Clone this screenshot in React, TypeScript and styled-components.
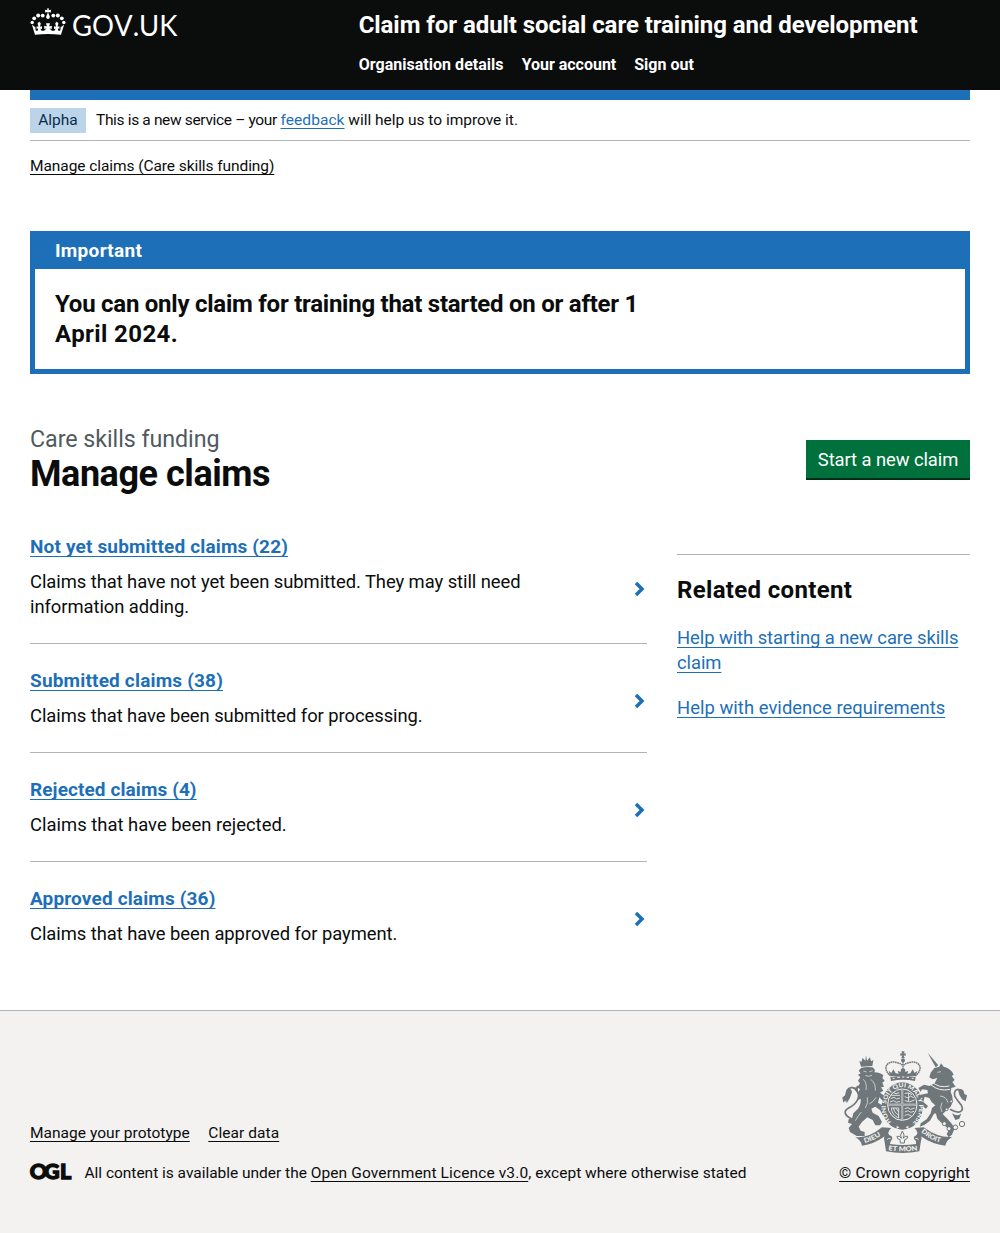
import React from "react";
import styled, { createGlobalStyle } from "styled-components";

const INK = "#0b0c0c";
const BLUE = "#1d70b8";
const RULE = "#b1b4b6";
const FOOTER_BG = "#f3f2f1";
const ARMS = "#6f777b";

const GlobalStyle = createGlobalStyle`
  html { background: ${FOOTER_BG}; }
  body {
    margin: 0;
    background: #fff;
    color: ${INK};
    font-family: Roboto, "Liberation Sans", sans-serif;
    -webkit-font-smoothing: antialiased;
  }
  *, *::before, *::after { box-sizing: border-box; }
  h1, h2, p, ul { margin: 0; padding: 0; }
  ul { list-style: none; }
`;

type Size = "s" | "m" | "l" | "xl";
const fontSize = { s: 15.5, m: 18.4, l: 23.25, xl: 36 };
const boldSize = { s: 16, m: 19, l: 24, xl: 36 };
const lineHeight = { s: 20, m: 25, l: 30, xl: 40 };

const Text = styled.span<{ $size?: Size; $bold?: boolean; $track?: number; $color?: string }>`
  font-size: ${p => (p.$bold ? boldSize : fontSize)[p.$size ?? "m"]}px;
  line-height: ${p => lineHeight[p.$size ?? "m"]}px;
  font-weight: ${p => (p.$bold ? 700 : 400)};
  letter-spacing: ${p => p.$track ?? 0}px;
  color: ${p => p.$color ?? "inherit"};
`;

const Link = styled(Text)`
  color: ${p => p.$color ?? BLUE};
  text-decoration: underline;
  text-decoration-thickness: 1px;
  text-underline-offset: 3px;
  text-decoration-skip-ink: none;
`;

const Container = styled.div`
  width: 940px;
  margin: 0 auto;
`;

const Header = styled.header`
  background: ${INK};
  color: #fff;
  height: 90px;
`;
const HeaderGrid = styled(Container)`
  display: grid;
  grid-template-columns: 328.67px 1fr;
`;
const Logo = styled.svg`
  display: block;
  margin-top: 8px;
  overflow: visible;
`;
const Wordmark = styled.text`
  fill: #fff;
  font-family: Lato, sans-serif;
  font-size: 28px;
  font-kerning: none;
`;
const ServiceName = styled(Text)`
  display: block;
  padding-top: 10px;
`;
const Nav = styled.nav`
  display: flex;
  gap: 18px;
  margin-top: 15px;
`;
const NavLink = styled(Text)`
  white-space: nowrap;
`;
const BlueBar = styled(Container)`
  height: 10px;
  background: ${BLUE};
`;

const PhaseBanner = styled(Container)`
  display: flex;
  align-items: center;
  gap: 10px;
  height: 41px;
  border-bottom: 1px solid ${RULE};
`;
const Tag = styled(Text)`
  display: flex;
  justify-content: center;
  width: 56px;
  height: 25px;
  padding-top: 2px;
  background: #bbd4ea;
  color: #0c2d4a;
`;
const Breadcrumb = styled(Container)`
  display: flex;
  padding-top: 15px;
`;

const Notice = styled.section`
  margin-top: 55px;
  border: 5px solid ${BLUE};
`;
const NoticeHead = styled.div`
  display: flex;
  height: 33px;
  padding: 2px 20px 6px;
  background: ${BLUE};
  color: #fff;
`;
const NoticeBody = styled.div`
  display: flex;
  padding: 20px;
`;
const NoticeText = styled(Text).attrs({ as: "p" })`
  max-width: 605px;
`;

const TitleRow = styled.div`
  display: flex;
  justify-content: space-between;
  align-items: flex-start;
  margin-top: 50px;
`;
const Heading = styled.h1`
  display: flex;
  flex-direction: column;
`;
const Button = styled.button`
  display: flex;
  justify-content: center;
  align-items: center;
  width: 164px;
  height: 38px;
  margin: 16px 0 0;
  padding: 1px 0 0;
  border: 0;
  background: #00703c;
  color: #fff;
  box-shadow: 0 2px 0 #002d18;
  font-family: inherit;
`;

const Columns = styled.div`
  display: grid;
  grid-template-columns: 617px 293px;
  gap: 30px;
  margin-top: 40px;
`;
const ClaimItem = styled.li`
  display: flex;
  justify-content: space-between;
  padding: 24px 0;
  border-bottom: 1px solid ${RULE};
  &:first-child { padding-top: 0; }
  &:last-child { border-bottom: 0; }
`;
const ClaimCopy = styled.div`
  display: flex;
  flex-direction: column;
  align-items: flex-start;
  gap: 10px;
  max-width: 520px;
`;
const Chevron = styled.svg<{ $drop: number }>`
  flex: none;
  margin: ${p => p.$drop}px 2px 0 0;
`;
const Aside = styled.aside`
  display: flex;
  flex-direction: column;
  align-items: flex-start;
  gap: 20px;
  margin-top: 20px;
  padding-top: 20px;
  border-top: 1px solid ${RULE};
`;

const Footer = styled.footer`
  height: 223px;
  margin-top: 40px;
  border-top: 1px solid ${RULE};
  background: ${FOOTER_BG};
`;
const FooterRow = styled(Container)`
  display: flex;
  justify-content: space-between;
  align-items: flex-end;
  padding-top: 40px;
`;
const FooterMeta = styled.div`
  display: flex;
  flex-direction: column;
  gap: 20px;
`;
const FooterLinks = styled.div`
  display: flex;
  gap: 18.5px;
`;
const Licence = styled.div`
  display: flex;
  align-items: center;
`;
const OglMark = styled.svg`
  margin: -3px 13.5px 0 0;
  overflow: visible;
`;
const OglText = styled.text`
  fill: ${INK};
  stroke: ${INK};
  stroke-width: 1.3px;
  font-family: Lato, sans-serif;
  font-weight: 900;
  font-size: 21.6px;
`;
const Crest = styled.div`
  display: flex;
  flex-direction: column;
  align-items: center;
  gap: 10px;
`;
const Motto = styled.text<{ $size: number }>`
  fill: ${FOOTER_BG};
  font-family: Lato, sans-serif;
  font-weight: 900;
  font-size: ${p => p.$size}px;
`;

const pearls: [number, number, number][] = [
  [2.2, 14.6, 1.75], [4.2, 10.3, 1.9], [8.2, 7.6, 2], [12.7, 7.6, 1.9],
];

function GovLogo() {
  return (
    <Logo width="150" height="32" viewBox="0 0 150 32" role="img" aria-label="GOV.UK">
      <g fill="#fff">
        <path d="M16.9 .4h2.2l-.5 1.9 2.3-.5v2.6l-2.3-.5-.3 1.1 1.5 3.4c.2 1.5-.6 2.4-1.8 2.7-1.2-.3-2-1.2-1.8-2.7l1.5-3.4-.3-1.1-2.3.5v-2.6l2.3.5z" />
        {pearls.map(([x, y, r]) => (
          <React.Fragment key={x}>
            <circle cx={x} cy={y} r={r} />
            <circle cx={36 - x} cy={y} r={r} />
          </React.Fragment>
        ))}
        <path d="M5 26.8 L1.9 16.7 L5.4 19.2 L5.6 22.2 Q6.4 23.3 7.8 22.6 L8.2 20.2 L6.6 21 V18.2 L8.4 18.8 L7.6 15.2 L9.2 13.8 L10.8 15.2 L10 18.8 L12 18.2 V21 L10.4 20.4 L11.2 22.4 Q13 23.3 14.8 22.2 L16.6 20.2 L14.2 21 V17.8 L16.8 18.6 L16 15.2 H20 L19.2 18.6 L21.8 17.8 V21 L19.4 20.2 L21.2 22.2 Q23 23.3 24.8 22.4 L25.6 20.4 L24 21 V18.2 L26 18.8 L25.2 15.2 L26.8 13.8 L28.4 15.2 L27.6 18.8 L29.4 18.2 V21 L27.8 20.2 L28.2 22.6 Q29.6 23.3 30.4 22.2 L30.6 19.2 L34.1 16.7 L31 26.8 Q18 25.2 5 26.8Z" />
      </g>
      <Wordmark x="42" y="28.4" textLength="105.5" lengthAdjust="spacingAndGlyphs">GOV.UK</Wordmark>
    </Logo>
  );
}

function Arms() {
  return (
    <svg width="125" height="102" viewBox="36 33 375 306" fill={ARMS} aria-hidden="true">
      <defs>
        <path id="garter" d="M184 246 A50 60 0 1 1 251 246" />
        <path id="dieu" d="M104 309 Q134 302 163 279" />
        <path id="mon" d="M175 331 Q218 337 265 331" />
        <path id="droit" d="M273 276 Q304 304 342 309" />
      </defs>

      {/* lion */}
      <path d="M88 62 L94 66 L98 54 L106 62 L108 46 L111 62 L120 52 L123 64 L130 60 L127 78 L93 80Z" />
      <path d="M93 84 Q108 79 128 82 L135 90 L133 97 Q150 97 160 106 L157 114 L164 122 L157 128 L162 140 L153 142 L160 152 L150 158 L172 174 L168 186 L158 182 L148 172 L144 188 L160 198 Q166 214 180 226 L184 236 L172 240 L162 232 L150 210 L136 200 L124 206 L128 218 L146 228 L156 246 L150 256 L136 256 L128 240 L112 232 L96 246 L86 260 L92 272 L104 276 L104 288 L80 288 L60 276 L56 264 L66 252 L54 248 L56 238 L66 236 L70 220 L84 206 Q94 190 92 176 L80 182 L88 168 L82 160 L90 148 L82 142 L90 130 L84 122 L91 112 L84 104 L92 100 L86 92Z" />
      <path d="M68 238 C44 228 38 214 56 204 C80 192 92 172 82 154 C76 142 60 138 52 150 C46 160 52 172 44 184" fill="none" stroke={ARMS} strokeWidth="5" />
      <path d="M37 172 Q48 168 52 148 Q62 140 66 156 Q62 174 50 190 L48 178 L40 188Z M72 146 L84 136 L84 162Z" />
      <path d="M100 93 L110 96 M118 95 L128 92 M106 106 Q114 112 126 106 M100 118 Q112 130 108 150 M122 118 Q138 130 136 152 M112 172 Q116 188 106 204 M138 172 Q132 184 118 192 M94 216 Q84 228 76 242" fill="none" stroke={FOOTER_BG} strokeWidth="2" />

      {/* unicorn */}
      <path d="M293 38 L325 76 L317 82Z" />
      <path d="M313 84 L328 80 L333 70 L341 80 Q362 84 371 104 L365 108 L374 120 L367 126 L377 140 L364 144 L362 156 Q374 180 362 200 Q348 212 338 222 L352 236 Q366 250 374 264 L366 284 L356 292 L350 282 L358 268 L340 254 L322 236 L318 222 Q314 216 308 228 L300 242 L284 254 L270 260 L272 250 L290 238 L302 220 L306 204 L316 196 Q302 186 298 174 L284 170 L280 186 L294 198 L288 206 L274 196 L267 186 L272 164 L294 160 L292 150 L276 148 L272 156 L265 144 L282 134 L298 138 L314 130 L322 114 L308 118 L298 112 L302 98Z" />
      <path d="M304 124 Q326 146 358 138 M302 134 Q328 156 360 148" fill="none" stroke={FOOTER_BG} strokeWidth="3" />
      <path d="M360 208 C392 226 402 210 394 196 C382 178 366 168 376 152 C384 144 396 150 396 164 C398 172 402 174 408 170" fill="none" stroke={ARMS} strokeWidth="5" />
      <path d="M384 148 Q402 144 403 162 L411 166 L407 184 L396 178 Q386 166 384 148Z M366 220 Q384 232 394 220 L388 236 L376 240Z" />
      <g fill={FOOTER_BG} stroke={ARMS} strokeWidth="3">
        <circle cx="343" cy="251" r="6" />
        <circle cx="357" cy="266" r="6" />
        <circle cx="376" cy="262" r="7" />
        <circle cx="396" cy="252" r="8" />
        <circle cx="364" cy="184" r="4" />
        <circle cx="350" cy="208" r="4" />
      </g>
      <path d="M322 97 L333 95 M330 168 Q350 170 354 188 M336 188 Q328 204 336 216" fill="none" stroke={FOOTER_BG} strokeWidth="2" />

      {/* garter and quartered shield */}
      <ellipse cx="217" cy="198" rx="62" ry="71" />
      <ellipse cx="217" cy="194" rx="44" ry="47" stroke={FOOTER_BG} strokeWidth="3" />
      <Motto $size={18}>
        <textPath href="#garter" textLength="275" lengthAdjust="spacingAndGlyphs">HONI SOIT QUI MAL Y PENSE</textPath>
      </Motto>
      <g fill="none" stroke={FOOTER_BG} strokeWidth="2.5">
        <path d="M217 147 V242 M174 194 H260" strokeWidth="5" />
        <path d="M217 147 V242 M174 194 H260" strokeWidth="2" stroke={ARMS} />
        <path d="M184 166 h26 M182 176 l10 -4 l8 5 l10 -3 M180 186 l10 -4 l10 5 l10 -3 M190 158 l8 3 l10 -3" />
        <path d="M224 160 q12 -4 22 4 M224 170 l10 4 l8 -6 l10 6 M224 182 q14 8 30 -2 M236 158 v26" />
        <path d="M184 204 Q186 226 206 234 M190 204 Q192 218 206 226 M197 204 L206 216 M184 204 H206 V234" />
        <path d="M224 206 l10 -3 l8 5 l12 -4 M224 216 l10 -4 l8 5 l10 -3 M224 227 l8 -4 l12 4" />
      </g>
      <path d="M200 257 l8 5 l-8 5z M235 257 l-8 5 l8 5z" fill={FOOTER_BG} />

      {/* crown */}
      <path d="M214 34 h10 l-3 7 6 -2 v9 l-6 -2 3 8 h-10 l3 -8 -6 2 v-9 l6 2z" />
      <circle cx="219" cy="61" r="6" />
      <g fill="none" stroke={ARMS} strokeWidth="4.5" strokeDasharray="5 1.5">
        <path d="M182 108 C160 90 164 66 192 66 Q208 68 218 76" />
        <path d="M256 108 C278 90 274 66 246 66 Q230 68 220 76" />
        <path d="M219 64 V92" />
      </g>
      <path d="M180 108 L176 92 L184 99 L190 88 L197 100 L206 101 L203 92 L212 96 L213 86 H225 L226 96 L235 92 L232 101 L241 100 L248 88 L254 99 L262 92 L258 108Z" />
      <path d="M181 111 Q219 105 257 111 L255 123 Q219 116 183 123Z" />
      <path d="M188 115 h6 M202 112 h8 M216 111 h7 M230 112 h7 M245 115 h6" stroke={FOOTER_BG} strokeWidth="3" />

      {/* motto ribbon */}
      <path d="M76 291 Q114 296 156 262 L184 264 Q166 278 184 292 L162 290 Q132 312 96 317 Q94 302 76 291Z" />
      <path d="M366 291 Q324 294 281 262 L253 264 Q271 278 253 292 L275 290 Q306 312 346 317 Q348 302 366 291Z" />
      <path d="M163 300 Q158 286 178 286 Q194 290 182 304 L180 312 Q219 318 258 312 V304 Q244 290 260 286 Q280 286 273 302 L268 334 Q218 344 168 334Z" />
      <path d="M172 300 Q173 292 182 296 M265 300 Q264 292 256 296" fill="none" stroke={FOOTER_BG} strokeWidth="2.5" />
      <Motto $size={20}><textPath href="#dieu" textLength="54" lengthAdjust="spacingAndGlyphs">DIEU</textPath></Motto>
      <Motto $size={20}><textPath href="#mon" textLength="88" lengthAdjust="spacingAndGlyphs">ET MON</textPath></Motto>
      <Motto $size={20}><textPath href="#droit" textLength="66" lengthAdjust="spacingAndGlyphs">DROIT</textPath></Motto>
      <path d="M217 273 Q226 286 220 295 Q224 286 233 289 Q234 298 224 299 L223 309 H211 L210 299 Q200 298 201 289 Q210 286 214 295 Q208 286 217 273Z" fill={FOOTER_BG} stroke={ARMS} strokeWidth="3" />
    </svg>
  );
}

const navItems = [
  { label: "Organisation details", track: 0.03 },
  { label: "Your account", track: -0.02 },
  { label: "Sign out", track: 0 },
];

const claims = [
  { title: "Not yet submitted claims (22)", track: 0.16, text: "Claims that have not yet been submitted. They may still need information adding.", textTrack: -0.06, drop: 47 },
  { title: "Submitted claims (38)", track: 0.18, text: "Claims that have been submitted for processing.", textTrack: -0.06, drop: 25 },
  { title: "Rejected claims (4)", track: 0.09, text: "Claims that have been rejected.", textTrack: 0.02, drop: 25 },
  { title: "Approved claims (36)", track: 0.15, text: "Claims that have been approved for payment.", textTrack: -0.05, drop: 25 },
];

export default function App() {
  return (
    <>
      <GlobalStyle />
      <Header>
        <HeaderGrid>
          <GovLogo />
          <div>
            <ServiceName $size="l" $bold $track={-0.065}>Claim for adult social care training and development</ServiceName>
            <Nav>
              {navItems.map(n => (
                <NavLink key={n.label} $size="s" $bold $track={n.track}>{n.label}</NavLink>
              ))}
            </Nav>
          </div>
        </HeaderGrid>
      </Header>
      <BlueBar />
      <PhaseBanner>
        <Tag $size="s">Alpha</Tag>
        <Text $size="s" $track={-0.02}>
          <Text $size="s" $track={-0.34}>This is a new service – your </Text>
          <Link $size="s" $track={0.07}>feedback</Link> will help us to improve it.
        </Text>
      </PhaseBanner>
      <Breadcrumb>
        <Link $size="s" $track={-0.075} $color={INK}>Manage claims (Care skills funding)</Link>
      </Breadcrumb>

      <Container as="main">
        <Notice>
          <NoticeHead><Text $bold $track={0.3}>Important</Text></NoticeHead>
          <NoticeBody>
            <NoticeText $size="l" $bold $track={-0.25}>
              You can only claim for training that started on or after 1<br />
              <Text $size="l" $bold $track={0.4}>April 2024.</Text>
            </NoticeText>
          </NoticeBody>
        </Notice>

        <TitleRow>
          <Heading>
            <Text $size="l" $color="#505a5f" $track={-0.05}>Care skills funding</Text>
            <Text $size="xl" $bold $track={-0.45}>Manage claims</Text>
          </Heading>
          <Button><Text $track={-0.08}>Start a new claim</Text></Button>
        </TitleRow>

        <Columns>
          <ul>
            {claims.map(c => (
              <ClaimItem key={c.title}>
                <ClaimCopy>
                  <Link $bold $track={c.track}>{c.title}</Link>
                  <Text $track={c.textTrack}>{c.text}</Text>
                </ClaimCopy>
                <Chevron $drop={c.drop} width="11" height="16" viewBox="0 0 11 16">
                  <path d="M2 2 L8 8 L2 14" fill="none" stroke={BLUE} strokeWidth="3.5" />
                </Chevron>
              </ClaimItem>
            ))}
          </ul>
          <Aside>
            <Text as="h2" $size="l" $bold $track={0.33}>Related content</Text>
            <Link $track={-0.06}>Help with starting a new care skills claim</Link>
            <Link $track={0.05}>Help with evidence requirements</Link>
          </Aside>
        </Columns>
      </Container>

      <Footer>
        <FooterRow>
          <FooterMeta>
            <FooterLinks>
              <Link $size="s" $track={0.03} $color={INK}>Manage your prototype</Link>
              <Link $size="s" $track={0.06} $color={INK}>Clear data</Link>
            </FooterLinks>
            <Licence>
              <OglMark width="41" height="17" viewBox="0 0 41 17" aria-label="Open Government Licence">
                <OglText x="-0.3 14.1 30" y="16.3">OGL</OglText>
              </OglMark>
              <Text $size="s" $track={0.03}>
                <Text $size="s" $track={-0.02}>All content is available under the </Text>
                <Link $size="s" $track={0.12} $color={INK}>Open Government Licence v3.0</Link>, except where otherwise stated
              </Text>
            </Licence>
          </FooterMeta>
          <Crest>
            <Arms />
            <Link $size="s" $track={0.15} $color={INK}>© Crown copyright</Link>
          </Crest>
        </FooterRow>
      </Footer>
    </>
  );
}
